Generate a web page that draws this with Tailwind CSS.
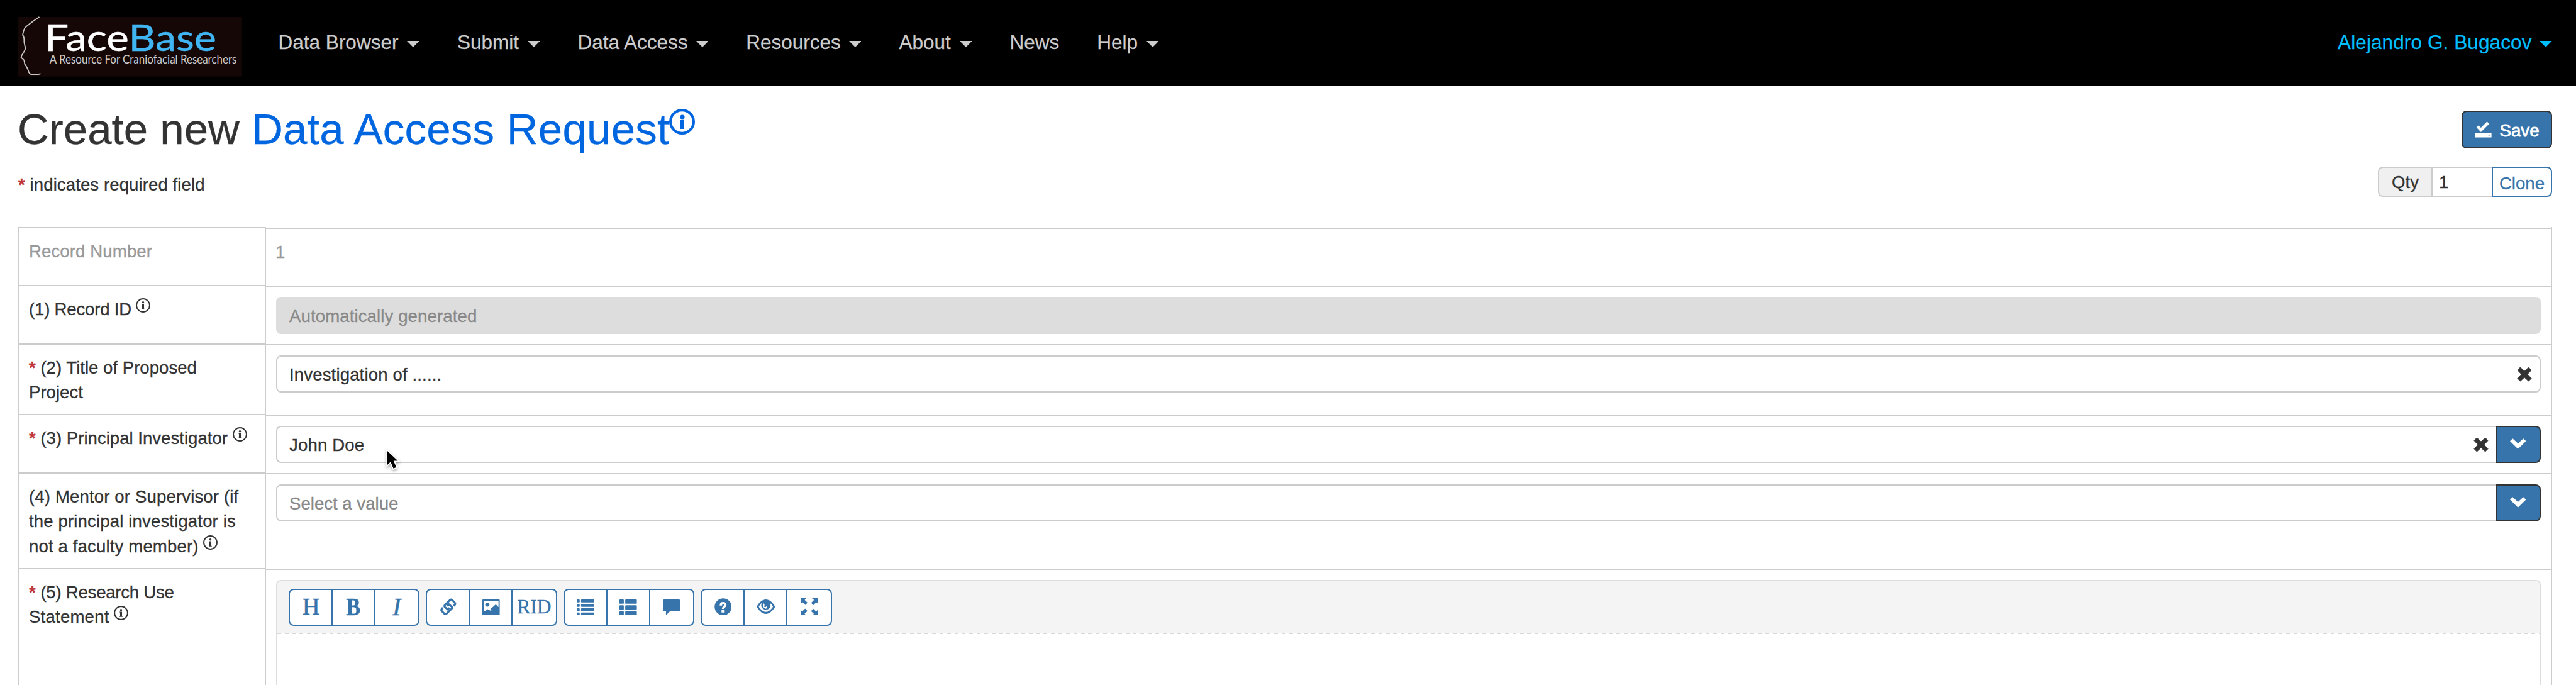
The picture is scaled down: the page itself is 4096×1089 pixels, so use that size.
<!DOCTYPE html>
<html lang="en">
<head>
<meta charset="utf-8">
<title>Create new Data Access Request</title>
<script src="https://cdn.jsdelivr.net/npm/@tailwindcss/browser@4"></script>
</head>
<body class="w-[4096px] h-[1089px] overflow-hidden bg-white text-[#333] text-[27.6px] leading-[39.4px] font-['Liberation_Sans',Arial,sans-serif]">
<svg class="hidden">
  <symbol id="info" viewBox="0 0 24 24"><circle cx="12" cy="12" r="10.9" fill="none" stroke="currentColor" stroke-width="2.1"/><circle cx="12" cy="7" r="1.8" fill="currentColor"/><path d="M9.6 9.8h4v7.6h.8v1.2H9.6v-1.2h.8v-6.4h-.8z" fill="currentColor"/></symbol>
  <symbol id="info-lg" viewBox="0 0 41 41"><circle cx="20.5" cy="20.5" r="18.4" fill="none" stroke="currentColor" stroke-width="4.2"/><circle cx="21" cy="13" r="3.6" fill="currentColor"/><path d="M17.3 18h6.7v14h-6.7z" fill="currentColor"/></symbol>
  <symbol id="remove" viewBox="0 0 24 24"><path d="M5.4 1 12 7.2 18.6 1 23 5.4 16.8 12l6.2 6.6-4.4 4.4L12 16.8 5.4 23 1 18.6 7.2 12 1 5.4z" fill="currentColor" stroke="currentColor" stroke-linejoin="round"/></symbol>
  <symbol id="chevron" viewBox="0 0 26 17"><path d="M0 4.2 4.4 0 13 8 21.6 0 26 4.2 13 17z" fill="currentColor"/></symbol>
  <symbol id="caret" viewBox="0 0 20 10"><path d="M0 0h20L10 10z" fill="currentColor"/></symbol>
</svg>

<header class="flex h-[137px] bg-black pl-[28.6px] pr-[38px]">
  <svg class="mt-[26.6px] h-[94.6px] w-[354.8px] shrink-0 overflow-visible" viewBox="0 0 360 96">
    <rect width="360" height="96" fill="#140706"/>
    <path d="M34 0C25 6 15 13 10.500 18C8 22 8 26 7 29C9 31 9.500 34 9.500 38C9 43 11.500 47 11.500 51C10 57 5 61 4.500 65C6 67 8 68 9.500 70L10.500 76C12.500 79 15 82 16 86C17 90 18 92 21 92.500C26 93.500 32 93 36 91.500" fill="none" stroke="#c9c5c4" stroke-width="1.900"/>
    <text x="42.500" y="54.300" font-family="Lato, sans-serif" font-size="59" fill="#fff" stroke="#fff" stroke-width=".5" textLength="136" lengthAdjust="spacingAndGlyphs">Face</text>
    <text x="178" y="54.300" font-family="Lato, sans-serif" font-size="59" fill="#41b4f2" stroke="#41b4f2" stroke-width=".5" textLength="141.500" lengthAdjust="spacingAndGlyphs">Base</text>
    <text x="50.500" y="75.300" font-family="Lato, sans-serif" font-size="18.500" fill="#cfcccb" textLength="302" lengthAdjust="spacingAndGlyphs">A Resource For Craniofacial Researchers</text>
  </svg>
  <nav class="ml-[59.2px] flex gap-[60px] pt-[47px] text-[31.5px] leading-[40px] text-[#ccc] [-webkit-text-stroke:0.25px]">
    <a class="flex gap-[13.800px] whitespace-nowrap">Data Browser<svg class="mt-[18px] h-[10px] w-[19.7px]"><use href="#caret"/></svg></a>
    <a class="flex gap-[13.800px] whitespace-nowrap">Submit<svg class="mt-[18px] h-[10px] w-[19.7px]"><use href="#caret"/></svg></a>
    <a class="flex gap-[13px] whitespace-nowrap">Data Access<svg class="mt-[18px] h-[10px] w-[19.7px]"><use href="#caret"/></svg></a>
    <a class="flex gap-[13px] whitespace-nowrap">Resources<svg class="mt-[18px] h-[10px] w-[19.7px]"><use href="#caret"/></svg></a>
    <a class="flex gap-[14px] whitespace-nowrap">About<svg class="mt-[18px] h-[10px] w-[19.7px]"><use href="#caret"/></svg></a>
    <a class="whitespace-nowrap">News</a>
    <a class="flex gap-[13.500px] whitespace-nowrap">Help<svg class="mt-[18px] h-[10px] w-[19.7px]"><use href="#caret"/></svg></a>
  </nav>
  <a class="ml-auto flex gap-[12.800px] whitespace-nowrap pt-[47px] text-[31.5px] leading-[40px] tracking-[0.1px] text-[#00bfff] [-webkit-text-stroke:0.25px]">Alejandro G. Bugacov<svg class="mt-[18px] h-[10px] w-[19.7px]"><use href="#caret"/></svg></a>
</header>

<main class="pl-[29px] pr-[38px] pt-[31px] [-webkit-text-stroke:0.3px]">
  <div class="flex h-[76px] justify-between">
    <h1 class="-ml-px whitespace-nowrap text-[69px] leading-[76px]"><span>Create new</span> <span class="tracking-[0.250px] text-[#0066e0]">Data Access Request<svg class="inline-block h-[41px] w-[41px] align-[15.5px]"><use href="#info-lg"/></svg></span></h1>
    <button class="mt-[8px] flex h-[60px] w-[144px] rounded-[8px] border-2 border-[#333] bg-[#3674ab] pl-[20px] text-white">
      <svg class="mt-[15px] h-[25.6px] w-[25.6px]" viewBox="0 0 26 26" fill="currentColor"><path d="M1.700 9.600 4.900 6.500 9 10.200 18.800.3 22.200 4 9 17.300zM0 19h26v7H0z"/><path d="M21 21.300h2.700v1.500H21z" fill="#3674ab"/></svg>
      <span class="ml-[13px] mt-[9.500px] [-webkit-text-stroke:0.8px_white]">Save</span>
    </button>
  </div>
  <div class="mt-[21px] flex h-[47px] justify-between">
    <p class="mt-[9px] whitespace-nowrap tracking-[0.080px]"><b class="text-[#c03539]">*</b> indicates required field</p>
    <div class="flex h-[48px] w-[277px]">
      <span class="w-[85px] rounded-l-[8px] border-y-2 border-l-2 border-[#ccc] bg-[#f0f0f0] pl-[20px] pt-[2.500px]">Qty</span>
      <span class="w-[96px] border-y-2 border-l-2 border-[#ccc] pl-[10px] pt-[2.500px]">1</span>
      <button class="w-[96px] rounded-r-[8px] border-2 border-[#3674ab] pt-[5px] text-[#3674ab]">Clone</button>
    </div>
  </div>

  <section class="mt-[49px] w-[4029px] border-x-2 border-[#ccc]">
    <div class="flex h-[92px]">
      <div class="w-[392px] border-r-2 border-t-2 border-[#ccc] pl-[15px] pt-[17px] tracking-[0.100px] text-[#999]">Record Number</div>
      <div class="mt-px flex-1 border-t-2 border-[#ccc] pl-[15px] pt-[17px] text-[#999]">1</div>
    </div>
    <div class="flex h-[93px]">
      <div class="w-[392px] border-r-2 border-t-2 border-[#ccc] pl-[15px] pt-[17px] tracking-[-0.200px]">(1) Record ID <svg class="inline-block h-[23px] w-[23px] align-[4px]"><use href="#info"/></svg></div>
      <div class="mt-px flex-1 border-t-2 border-[#ccc] pl-[16px] pr-[16px] pt-[16px]">
        <div class="h-[59px] rounded-[8px] border-2 border-[#ddd] bg-[#ddd] pl-[19px] pt-[9px] tracking-[0.1px] text-[#888]">Automatically generated</div>
      </div>
    </div>
    <div class="flex h-[112px]">
      <div class="w-[392px] border-r-2 border-t-2 border-[#ccc] pl-[15px] pt-[17px]"><b class="text-[#c03539]">*</b> (2) Title of Proposed<br>Project</div>
      <div class="mt-px flex-1 border-t-2 border-[#ccc] pl-[16px] pr-[16px] pt-[16px]">
        <div class="flex h-[59px] justify-between rounded-[8px] border-2 border-[#ccc] pl-[19px] pr-[12px] pt-[9px] tracking-[0.130px]">Investigation of ......<svg class="mt-[7px] h-[24px] w-[24px]"><use href="#remove"/></svg></div>
      </div>
    </div>
    <div class="flex h-[93px]">
      <div class="w-[392px] whitespace-nowrap border-r-2 border-t-2 border-[#ccc] pl-[15px] pt-[17px]"><b class="text-[#c03539]">*</b> (3) Principal Investigator <svg class="inline-block h-[23px] w-[23px] align-[4px]"><use href="#info"/></svg></div>
      <div class="mt-px flex flex-1 border-t-2 border-[#ccc] pl-[16px] pr-[16px] pt-[16px]">
        <div class="flex h-[59px] flex-1 justify-between rounded-l-[8px] border-y-2 border-l-2 border-[#ccc] pl-[19px] pr-[12px] pt-[9px] tracking-[0.130px]">John Doe<svg class="mt-[7px] h-[24px] w-[24px]"><use href="#remove"/></svg></div>
        <button class="flex h-[59px] w-[71px] justify-center rounded-r-[8px] border-2 border-[#333] bg-[#3674ab] pt-[18px] text-white"><svg class="mr-[2px] h-[17px] w-[25.500px]"><use href="#chevron"/></svg></button>
      </div>
    </div>
    <div class="flex h-[152px]">
      <div class="w-[392px] whitespace-nowrap border-r-2 border-t-2 border-[#ccc] pl-[15px] pt-[17px] tracking-[0.130px]">(4) Mentor or Supervisor (if<br>the principal investigator is<br>not a faculty member) <svg class="inline-block h-[23px] w-[23px] align-[4px]"><use href="#info"/></svg></div>
      <div class="mt-px flex flex-1 border-t-2 border-[#ccc] pl-[16px] pr-[16px] pt-[16px]">
        <div class="h-[59px] flex-1 rounded-l-[8px] border-y-2 border-l-2 border-[#ccc] pl-[19px] pt-[9px] text-[#888]">Select a value</div>
        <button class="flex h-[59px] w-[71px] justify-center rounded-r-[8px] border-2 border-[#333] bg-[#3674ab] pt-[18px] text-white"><svg class="mr-[2px] h-[17px] w-[25.500px]"><use href="#chevron"/></svg></button>
      </div>
    </div>
    <div class="flex h-[186px]">
      <div class="w-[392px] border-r-2 border-t-2 border-[#ccc] pl-[15px] pt-[17px]"><b class="text-[#c03539]">*</b> <span class="tracking-[-0.250px]">(5) Research Use</span><br><span class="tracking-[0.200px]">Statement </span><svg class="inline-block h-[23px] w-[23px] align-[4px]"><use href="#info"/></svg></div>
      <div class="mt-px flex-1 border-t-2 border-[#ccc] pl-[16px] pr-[16px] pt-[16px]">
        <div class="h-[180px] overflow-hidden rounded-t-[8px] border-2 border-b-0 border-[#ddd]">
          <div class="flex h-[82px] gap-[10px] bg-[#f4f4f4] pl-[17.500px] pt-[11.500px] text-[#3674ab]">
            <div class="grid h-[59px] w-[208.500px] grid-cols-3 divide-x-2 divide-[#3674ab] rounded-[8px] border-2 border-[#3674ab] bg-white text-center font-['Liberation_Serif',serif] leading-[53px]">
              <span class="pl-[2px] text-[38.500px] [-webkit-text-stroke:0.5px]">H</span>
              <span class="text-[41px] font-bold"><span class="inline-block scale-x-[0.84]">B</span></span>
              <span class="text-[41px] italic [-webkit-text-stroke:0.6px]">I</span>
            </div>
            <div class="grid h-[59px] w-[208.500px] grid-cols-3 divide-x-2 divide-[#3674ab] rounded-[8px] border-2 border-[#3674ab] bg-white">
              <span class="flex justify-center pl-px pt-[13px]"><svg class="h-[27.600px] w-[27.600px]" viewBox="0 0 28 28" fill="none" stroke="currentColor" stroke-width="3.200"><path id="link-half" d="M22.800 12.800 24.600 10.600Q26 8.800 24.400 7.200L20.600 3.200Q18.600 1.400 16.800 3L8.600 11Q7 12.800 8.600 14.400L13.200 18.200 16 15.600"/><use href="#link-half" transform="rotate(180 14 14)"/></svg></span>
              <span class="flex justify-center pl-px pt-[13px]"><svg class="h-[27.600px] w-[27.600px]" viewBox="0 0 28 28" fill="currentColor"><path fill-rule="evenodd" d="M1 2h26q1 0 1 1v24q0 1-1 1H1q-1 0-1-1V3q0-1 1-1zM2 4v18.300l6.300-4.600 6.400 3.200-1-3.900L21.700 10 26 14.500V4z"/><circle cx="8" cy="10.300" r="3.300"/></svg></span>
              <span class="text-center font-['Liberation_Serif',serif] text-[31.500px] leading-[54px]">RID</span>
            </div>
            <div class="grid h-[59px] w-[208.500px] grid-cols-3 divide-x-2 divide-[#3674ab] rounded-[8px] border-2 border-[#3674ab] bg-white">
              <span class="flex justify-center pl-px pt-[13px]"><svg class="h-[27.600px] w-[27.600px]" viewBox="0 0 28 28" fill="currentColor"><g id="list-row"><rect y="2" width="4.800" height="4.800" rx="1"/><rect x="7" y="2" width="21" height="4.800" rx="1"/></g><use href="#list-row" y="7.100"/><use href="#list-row" y="14.200"/><use href="#list-row" y="21.200"/></svg></span>
              <span class="flex justify-center pl-px pt-[13px]"><svg class="h-[27.600px] w-[27.600px]" viewBox="0 0 28 28" fill="currentColor"><g id="th-row"><rect y="2" width="7" height="7" rx="1"/><rect x="9.300" y="2" width="18.700" height="7" rx="1"/></g><use href="#th-row" y="9.500"/><use href="#th-row" y="19"/></svg></span>
              <span class="flex justify-center pt-[13px]"><svg class="h-[27.600px] w-[27.600px]" viewBox="0 0 28 28" fill="currentColor"><path d="M2 2h24q2 0 2 2v14.700q0 2-2 2H11.800L5 27.500v-6.800H2q-2 0-2-2V4q0-2 2-2z"/></svg></span>
            </div>
            <div class="grid h-[59px] w-[208.500px] grid-cols-3 divide-x-2 divide-[#3674ab] rounded-[8px] border-2 border-[#3674ab] bg-white">
              <span class="flex justify-center pl-px pt-[13px]"><svg class="h-[27.600px] w-[27.600px]" viewBox="0 0 28 28"><circle cx="14" cy="14" r="13.700" fill="currentColor"/><path d="M10.400 12v-.8Q10.600 8 14 8T17.600 11C17.600 13.600 13.900 13.500 13.900 17.200" fill="none" stroke="#fff" stroke-width="3.800"/><path d="M11.500 18.800h5v4.300h-5z" fill="#fff"/></svg></span>
              <span class="flex justify-center pl-px pt-[13px]"><svg class="h-[27.600px] w-[29.600px]" viewBox="-1 0 30 28"><path d="M-1 13.700C4 5.500 9 2 14 2s10 3.500 15 11.700C24 21.800 19 25.300 14 25.300S4 21.800-1 13.700z" fill="currentColor"/><path d="M7.500 7.500C5.500 9 4 11 2.600 13.700 6 19.200 10 22 14 22s8-2.800 11.400-8.300C24 11 22.500 9 20.500 7.500q1 2 1 4c0 4-3.500 7.300-7.500 7.300s-7.500-3.300-7.500-7.300q0-2 1-4z" fill="#fff"/><path d="M10.500 8C8.500 12 10 16.500 14.500 17c1.200-1 1-2.500 0-4.500-1.200.5-2 0-4-4.500z" fill="#fff"/><circle cx="12.800" cy="12.800" r="1.700" fill="currentColor"/></svg></span>
              <span class="flex justify-center pt-[13px]"><svg class="h-[27.600px] w-[27.600px]" viewBox="0 0 28 28" fill="currentColor"><path id="arrow" d="M0 0h9.300L6.600 2.700 11.200 7.300 7.500 11 2.900 6.400 0 9.800z"/><use href="#arrow" transform="rotate(90 14 14)"/><use href="#arrow" transform="rotate(180 14 14)"/><use href="#arrow" transform="rotate(270 14 14)"/></svg></span>
            </div>
          </div>
          <div class="h-[2px] bg-[repeating-linear-gradient(90deg,#d8d8d8_0_6px,#fff_6px_11.830px)]"></div>
        </div>
      </div>
    </div>
  </section>
</main>

<svg class="absolute left-[612px] top-[713px] h-[38px] w-[28px] drop-shadow-[0_2px_2px_rgba(0,0,0,0.35)]" viewBox="-4 -4 28 38"><path d="M0 0v22l5-4.800 4.600 10.600 4.600-2L9.700 15.600H16.500z" fill="#000" stroke="#fff" stroke-width="3.600" paint-order="stroke"/></svg>
</body>
</html>
